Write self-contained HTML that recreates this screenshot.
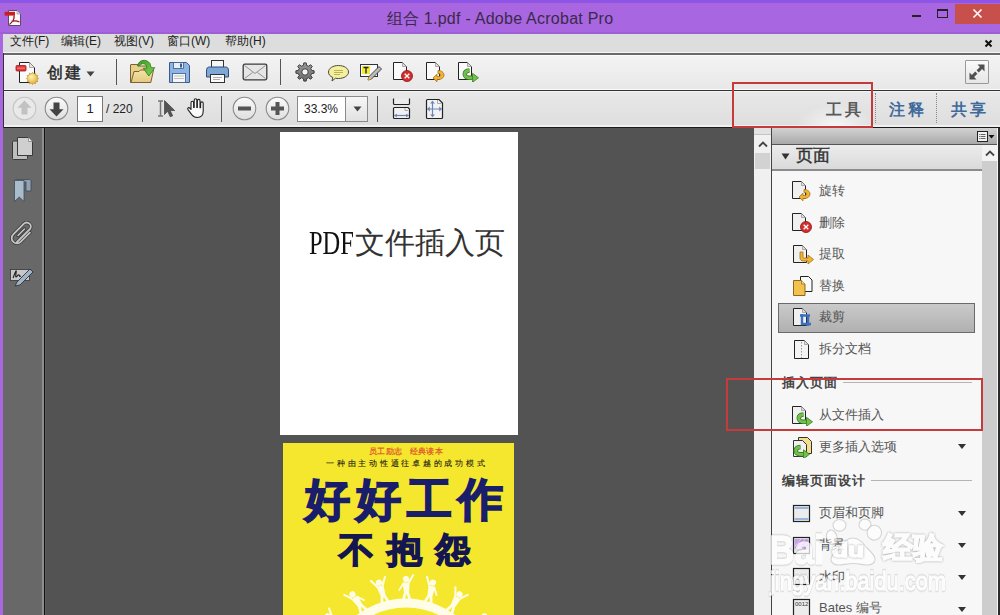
<!DOCTYPE html>
<html><head><meta charset="utf-8">
<style>
*{margin:0;padding:0;box-sizing:border-box}
html,body{width:1000px;height:615px;overflow:hidden}
body{position:relative;background:#a866e0;font-family:"Liberation Sans",sans-serif;color:#222}
.a{position:absolute}
#titlebar{left:0;top:0;width:1000px;height:34px;background:#a866e0}
#topstrip{left:0;top:0;width:1000px;height:3px;background:#8c55ea;border-bottom:1px solid #9655d8}
#title{left:0;top:9px;width:1000px;text-align:center;font-size:16px;color:#3a2a4a;letter-spacing:0.25px}
#menubar{left:3px;top:34px;width:997px;height:18px;background:#dddddd}
.mi{top:1px;font-size:12px;color:#222;white-space:nowrap}
#tb1{left:3px;top:56px;width:997px;height:33px;background:linear-gradient(#f3f3f3,#e8e8e8)}
#tb2{left:3px;top:92px;width:997px;height:33px;background:linear-gradient(#e8e8e8,#dedede)}
.hl{height:1px;background:#5a5a5a}
#rail{left:3px;top:128px;width:40px;height:487px;background:#686868}
#doc{left:46px;top:128px;width:708px;height:487px;background:#535353}
#vs{left:754px;top:128px;width:17px;height:487px;background:#f0f0f0}
#panel{left:772px;top:128px;width:228px;height:487px;background:#f4f4f4}
.it{position:absolute;left:819px;font-size:13px;line-height:18px;color:#555;white-space:nowrap}
.sh{position:absolute;left:782px;font-size:13px;line-height:18px;color:#444;font-weight:bold;white-space:nowrap;letter-spacing:1px}
.wm{color:#fff;-webkit-text-stroke:1.6px #fff;filter:drop-shadow(0 0 0.8px rgba(0,0,0,0.45));opacity:0.72;white-space:nowrap}
</style></head><body>
<div class="a" id="titlebar"></div>
<div class="a" id="topstrip"></div>
<div class="a" style="left:0;top:32px;width:1000px;height:2px;background:#9d5ed6"></div>
<div class="a" id="title">组合 1.pdf - Adobe Acrobat Pro</div>
<div class="a" id="menubar"></div>
<div class="a mi" style="left:10px;top:33px">文件(F)</div>
<div class="a mi" style="left:61px;top:33px">编辑(E)</div>
<div class="a mi" style="left:114px;top:33px">视图(V)</div>
<div class="a mi" style="left:167px;top:33px">窗口(W)</div>
<div class="a mi" style="left:225px;top:33px">帮助(H)</div>
<div class="a" style="left:3px;top:52px;width:997px;height:1px;background:#f6f6f6"></div>
<div class="a" style="left:3px;top:53px;width:997px;height:2px;background:#6a6a6a"></div>
<div class="a" style="left:3px;top:55px;width:997px;height:1px;background:#fbfbfb"></div>
<div class="a" id="tb1"></div>
<div class="a" style="left:3px;top:89px;width:997px;height:1px;background:#fafafa"></div>
<div class="a" style="left:3px;top:90px;width:997px;height:1px;background:#333"></div>
<div class="a" style="left:3px;top:91px;width:997px;height:1px;background:#f4f4f4"></div>
<div class="a" id="tb2"></div>
<div class="a" style="left:3px;top:125px;width:997px;height:2px;background:#f0f0f0"></div>
<div class="a" style="left:3px;top:127px;width:997px;height:1px;background:#1a1a1a"></div>
<div class="a" style="left:3px;top:53px;width:1px;height:75px;background:#333"></div>
<div class="a" id="rail"></div>
<div class="a" style="left:42px;top:128px;width:2px;height:487px;background:#8e8e8e"></div><div class="a" style="left:44px;top:128px;width:1px;height:487px;background:#111"></div><div class="a" style="left:45px;top:128px;width:1px;height:487px;background:#5c5c5c"></div>
<div class="a" id="doc"></div>
<div class="a" id="vs"></div>
<div class="a" style="left:771px;top:128px;width:1px;height:487px;background:#444"></div>
<div class="a" id="panel"></div>
<div class="a" style="left:280px;top:132px;width:238px;height:303px;background:#fff"></div>

<!-- app icon -->
<svg class="a" style="left:4px;top:9px" width="18" height="18" viewBox="0 0 18 18">
<path d="M4.5 1.5h8.5l3.5 3.5v11.5h-12z" fill="#fbf7fb" stroke="#5d4a70" stroke-width="1"/>
<path d="M13 1.5v3.5h3.5" fill="#ddd" stroke="#888" stroke-width="0.6"/>
<rect x="0.6" y="2.8" width="10.4" height="3.8" fill="#c81e24"/>
<path d="M10 6.5c.6 3-1.5 6.5-4.5 9M7.5 12.3c2.5-.8 5.5-.6 8 .7" fill="none" stroke="#9c1418" stroke-width="1.3"/>
</svg>
<!-- window buttons -->
<div class="a" style="left:912px;top:15px;width:9px;height:2px;background:#222"></div>
<div class="a" style="left:937px;top:9px;width:11px;height:9px;border:1px solid #222;border-top-width:2px"></div>
<div class="a" style="left:955px;top:4px;width:45px;height:20px;background:#c8504c"></div>
<svg class="a" style="left:972px;top:8px" width="11" height="11" viewBox="0 0 11 11"><path d="M1.5 1.5l8 8M9.5 1.5l-8 8" stroke="#fff" stroke-width="1.6"/></svg>
<!-- menu close x -->
<svg class="a" style="left:984px;top:39px" width="9" height="9" viewBox="0 0 9 9"><path d="M1.5 1.5l6 6M7.5 1.5l-6 6" stroke="#111" stroke-width="2"/></svg>

<!-- ===== toolbar 1 ===== -->
<!-- create icon -->
<svg class="a" style="left:14px;top:60px" width="26" height="26" viewBox="0 0 26 26">
<defs><radialGradient id="sg" cx="0.4" cy="0.35" r="0.7"><stop offset="0" stop-color="#fff4b0"/><stop offset="1" stop-color="#e0a82a"/></radialGradient></defs>
<path d="M5.5 2.5h10l5 5v15h-15z" fill="#fafafa" stroke="#222" stroke-width="1"/>
<path d="M15.5 2.5v5h5" fill="#e6e6e6" stroke="#999" stroke-width="0.8"/>
<rect x="2" y="5.5" width="10" height="5.5" rx="1" fill="#e03a3a" stroke="#a01818" stroke-width="0.8"/>
<path d="M3 8.2h8" stroke="#ff9a9a" stroke-width="0.8"/>
<path d="M24.70 18.50 L22.94 19.69 L23.87 21.60 L21.75 21.75 L21.60 23.87 L19.69 22.94 L18.50 24.70 L17.31 22.94 L15.40 23.87 L15.25 21.75 L13.13 21.60 L14.06 19.69 L12.30 18.50 L14.06 17.31 L13.13 15.40 L15.25 15.25 L15.40 13.13 L17.31 14.06 L18.50 12.30 L19.69 14.06 L21.60 13.13 L21.75 15.25 L23.87 15.40 L22.94 17.31Z" fill="url(#sg)" stroke="#b98a20" stroke-width="0.6"/>
</svg>
<div class="a" style="left:47px;top:63px;font-size:16px;color:#2a2a2a;-webkit-text-stroke:0.5px #2a2a2a;letter-spacing:2px">创建</div>
<svg class="a" style="left:86px;top:71px" width="9" height="6" viewBox="0 0 9 6"><path d="M0.5 0.5h8l-4 5z" fill="#444"/></svg>
<div class="a" style="left:116px;top:59px;width:1px;height:26px;background:#555"></div>
<!-- open folder -->
<svg class="a" style="left:126px;top:56px" width="34" height="30" viewBox="0 0 34 30">
<defs><linearGradient id="fg" x1="0" y1="0" x2="0" y2="1"><stop offset="0" stop-color="#f6e3a6"/><stop offset="1" stop-color="#e4c982"/></linearGradient>
<linearGradient id="ag" x1="0" y1="0" x2="1" y2="1"><stop offset="0" stop-color="#3f9a22"/><stop offset="1" stop-color="#7fd35a"/></linearGradient></defs>
<path d="M5 8.5h7.5l1.5 1.5h8.5c.6 0 1 .4 1 1v15.5H4.5V9c0-.3.2-.5.5-.5z" fill="#e8cf8c" stroke="#7a6330" stroke-width="1"/>
<path d="M8 15.5h5l1.5-1.5h13l-2.7 12.5H5z" fill="url(#fg)" stroke="#7a6330" stroke-width="1"/>
<path d="M11.5 10C12.5 4 20 2 24 7.5l1.2 4.2h3.6l-6 8.3-5.5-7.8h3.5l-.7-2.8c-1.6-2.5-5.5-2.2-6.5.8z" fill="url(#ag)" stroke="#2f7a18" stroke-width="0.8"/>
</svg>
<!-- save -->
<svg class="a" style="left:168px;top:61px" width="23" height="23" viewBox="0 0 23 23">
<path d="M1.5 1.5h17l3 3v17h-20z" fill="#8db4e2" stroke="#3a5a8c" stroke-width="1"/>
<rect x="5.5" y="1.5" width="10" height="6" fill="#e8eef6" stroke="#3a5a8c" stroke-width="0.8"/>
<rect x="12" y="2.5" width="2" height="4" fill="#3a5a8c"/>
<rect x="4.5" y="12.5" width="13" height="9" fill="#f6f6f6" stroke="#3a5a8c" stroke-width="0.8"/>
<path d="M6 15h10M6 17.5h10" stroke="#aaa" stroke-width="0.7"/>
</svg>
<!-- print -->
<svg class="a" style="left:205px;top:59px" width="25" height="25" viewBox="0 0 25 25">
<rect x="6.5" y="1.5" width="12" height="9" fill="#f6f6f6" stroke="#333" stroke-width="1"/>
<path d="M1.5 12c0-3 1-4 3-4h16c2 0 3 1 3 4v6h-22z" fill="#7ea7d6" stroke="#2f4f7a" stroke-width="1"/>
<rect x="5.5" y="15.5" width="14" height="8" fill="#fbfbfb" stroke="#333" stroke-width="1"/>
<path d="M8 18.5h9M8 20.5h7" stroke="#999" stroke-width="0.8"/>
</svg>
<!-- mail -->
<svg class="a" style="left:242px;top:63px" width="26" height="18" viewBox="0 0 26 18">
<rect x="1.2" y="1.2" width="23.6" height="15.6" rx="1.5" fill="#e6e6e6" stroke="#3a3a3a" stroke-width="1.3"/>
<path d="M2.5 2.5l10.5 8 10.5-8M2.5 15.5l8-6M23.5 15.5l-8-6" fill="none" stroke="#888" stroke-width="0.9"/>
</svg>
<div class="a" style="left:280px;top:59px;width:1px;height:26px;background:#555"></div>
<!-- gear -->
<svg class="a" style="left:295px;top:62px" width="20" height="20" viewBox="0 0 20 20">
<defs><linearGradient id="gg" x1="0" y1="0" x2="0" y2="1"><stop offset="0" stop-color="#9a9a9a"/><stop offset="1" stop-color="#6a6a6a"/></linearGradient></defs>
<path d="M16.61 8.41 L19.12 8.78 L19.12 11.22 L16.61 11.59 L15.80 13.55 L17.31 15.58 L15.58 17.31 L13.55 15.80 L11.59 16.61 L11.22 19.12 L8.78 19.12 L8.41 16.61 L6.45 15.80 L4.42 17.31 L2.69 15.58 L4.20 13.55 L3.39 11.59 L0.88 11.22 L0.88 8.78 L3.39 8.41 L4.20 6.45 L2.69 4.42 L4.42 2.69 L6.45 4.20 L8.41 3.39 L8.78 0.88 L11.22 0.88 L11.59 3.39 L13.55 4.20 L15.58 2.69 L17.31 4.42 L15.80 6.45Z" fill="url(#gg)" stroke="#333" stroke-width="0.9" stroke-linejoin="round"/>
<circle cx="10" cy="10" r="3.2" fill="#f4f4f4" stroke="#333" stroke-width="0.9"/>
</svg>
<!-- bubble -->
<svg class="a" style="left:327px;top:64px" width="23" height="19" viewBox="0 0 23 19">
<path d="M11.5 1.5c5.5 0 10 2.8 10 6.5s-4.5 6.5-10 6.5c-1 0-2 0-3-.3L5 17l.8-3.6C3 12.3 1.5 10.4 1.5 8 1.5 4.3 6 1.5 11.5 1.5z" fill="#f5f0a0" stroke="#4a4a3a" stroke-width="1"/>
<path d="M7 6.5h9M7 8.5h9M7 10.5h6" stroke="#b8ae50" stroke-width="0.9"/>
</svg>
<!-- text pen -->
<svg class="a" style="left:359px;top:62px" width="24" height="21" viewBox="0 0 24 21">
<rect x="1.5" y="2.5" width="17" height="12" fill="#fafafa" stroke="#333" stroke-width="1"/>
<rect x="3" y="4" width="8" height="8" fill="#f3ea3a"/>
<path d="M4.5 5.5h5M7 5.5v6" stroke="#222" stroke-width="1.3"/>
<path d="M9 18l1-3.5 10-10 2.5 2.5-10 10z" fill="#bbb" stroke="#333" stroke-width="0.9"/>
<path d="M9 18l1-3.5 2.5 2.5z" fill="#f2c94c"/>
</svg>
<!-- delete page -->
<svg class="a" style="left:392px;top:61px" width="22" height="21" viewBox="0 0 22 21">
<path d="M1.5 1.5h9l4 4v13h-13z" fill="#fafafa" stroke="#222" stroke-width="1"/>
<path d="M10.5 1.5v4h4" fill="#ddd" stroke="#999" stroke-width="0.8"/>
<circle cx="15" cy="15" r="5.5" fill="#d32f2f" stroke="#8a1010" stroke-width="0.8"/>
<path d="M12.7 12.7l4.6 4.6M17.3 12.7l-4.6 4.6" stroke="#fff" stroke-width="1.3"/>
</svg>
<!-- rotate page -->
<svg class="a" style="left:425px;top:61px" width="22" height="21" viewBox="0 0 22 21">
<path d="M1.5 1.5h9l4 4v13h-13z" fill="#fafafa" stroke="#222" stroke-width="1"/>
<path d="M10.5 1.5v4h4" fill="#ddd" stroke="#999" stroke-width="0.8"/>
<path d="M13 9.5c3.5 0 6 2 6 4.5s-2.5 4.5-5.5 4.5h-1.5v2.3l-4-3.8 4-3.8v2.3h1.5c1.2 0 2.3-.6 2.3-1.5S14.5 12.5 13 12.5z" fill="#f2b531" stroke="#a5701a" stroke-width="0.8"/>
</svg>
<!-- extract page -->
<svg class="a" style="left:457px;top:61px" width="23" height="21" viewBox="0 0 23 21">
<path d="M1.5 1.5h9l4 4v13h-13z" fill="#fafafa" stroke="#222" stroke-width="1"/>
<path d="M10.5 1.5v4h4" fill="#ddd" stroke="#999" stroke-width="0.8"/>
<path d="M12.5 9.5C6 10 6.5 16.8 12 16.8h4" fill="none" stroke="#3a7d22" stroke-width="4.4"/>
<path d="M12.5 9.5C6 10 6.5 16.8 12 16.8h4" fill="none" stroke="#72c150" stroke-width="2.8"/>
<path d="M15.5 12.3l6 4.5-6 4.5z" fill="#72c150" stroke="#3a7d22" stroke-width="0.8"/>
</svg>
<!-- fullscreen -->
<div class="a" style="left:965px;top:60px;width:24px;height:24px;border:1px solid #999;background:linear-gradient(#fafafa,#e6e6e6);border-radius:1px"></div>
<svg class="a" style="left:967px;top:62px" width="20" height="20" viewBox="0 0 20 20">
<path d="M10.5 2.5h7v7l-2.4-2.4-3.3 3.3-2.2-2.2 3.3-3.3zM9.5 17.5h-7v-7l2.4 2.4 3.3-3.3 2.2 2.2-3.3 3.3z" fill="#505050"/>
</svg>

<!-- ===== toolbar 2 ===== -->
<svg class="a" style="left:12px;top:96px" width="25" height="25" viewBox="0 0 25 25">
<circle cx="12.5" cy="12.5" r="11.3" fill="#e9e9e9" stroke="#c4c4c4" stroke-width="1.1"/>
<path d="M12.5 4.5l7 7.2h-4v6.8h-6v-6.8h-4z" fill="#c2c2c2"/>
</svg>
<svg class="a" style="left:44px;top:96px" width="25" height="25" viewBox="0 0 25 25">
<defs><linearGradient id="cg" x1="0" y1="0" x2="0" y2="1"><stop offset="0" stop-color="#fbfbfb"/><stop offset="1" stop-color="#dedede"/></linearGradient></defs>
<circle cx="12.5" cy="12.5" r="11.3" fill="url(#cg)" stroke="#8a8a8a" stroke-width="1.1"/>
<path d="M12.5 20.5l7-7.2h-4V6.5h-6v6.8h-4z" fill="#444"/>
</svg>
<div class="a" style="left:77px;top:96px;width:26px;height:26px;border:1px solid #777;background:#fff"></div>
<div class="a" style="left:77px;top:101px;width:26px;text-align:center;font-size:13px;color:#222">1</div>
<div class="a" style="left:106px;top:102px;font-size:12px;color:#222">/ 220</div>
<div class="a" style="left:142px;top:96px;width:1px;height:26px;background:#555"></div>
<svg class="a" style="left:156px;top:99px" width="22" height="20" viewBox="0 0 22 20">
<path d="M2 2h5M2 17h5M4.5 2v15" stroke="#777" stroke-width="1.5"/>
<path d="M8.5 1.5v14l3.2-3.2 2.5 5.5 2.5-1-2.5-5.3h4.5z" fill="#555" stroke="#333" stroke-width="0.6"/>
</svg>
<svg class="a" style="left:185px;top:97px" width="24" height="22" viewBox="0 0 24 22">
<path d="M6 12.5V5.8Q6 4.3 7.3 4.3Q8.6 4.3 8.6 5.8V10.5H9.2V3.3Q9.2 1.8 10.5 1.8Q11.8 1.8 11.8 3.3V10.5H12.4V3.8Q12.4 2.4 13.7 2.4Q15 2.4 15 3.8V10.8H15.6V6.3Q15.6 4.9 16.9 4.9Q18.2 4.9 18.2 6.3V14Q18.2 20.5 12.2 20.5Q8.6 20.5 6.9 17.8L3 12.6Q2.2 11.3 3.4 10.7Q4.6 10.2 6 12.5Z" fill="#fafafa" stroke="#222" stroke-width="1.1" stroke-linejoin="round"/>
</svg>
<div class="a" style="left:221px;top:96px;width:1px;height:26px;background:#555"></div>
<svg class="a" style="left:232px;top:96px" width="25" height="25" viewBox="0 0 25 25">
<circle cx="12.5" cy="12.5" r="11.3" fill="url(#cg)" stroke="#8a8a8a" stroke-width="1.1"/>
<rect x="6" y="10.5" width="13" height="4" fill="#555"/>
</svg>
<svg class="a" style="left:265px;top:96px" width="25" height="25" viewBox="0 0 25 25">
<circle cx="12.5" cy="12.5" r="11.3" fill="url(#cg)" stroke="#8a8a8a" stroke-width="1.1"/>
<path d="M10.5 6h4v4.5H19v4h-4.5V19h-4v-4.5H6v-4h4.5z" fill="#555"/>
</svg>
<div class="a" style="left:297px;top:96px;width:71px;height:26px;border:1px solid #8a8a8a;background:#fff"></div>
<div class="a" style="left:345px;top:97px;width:22px;height:24px;border-left:1px solid #8a8a8a;background:linear-gradient(#f6f6f6,#e2e2e2)"></div>
<svg class="a" style="left:353px;top:106px" width="9" height="6" viewBox="0 0 9 6"><path d="M0.5 0.5h8l-4 5z" fill="#444"/></svg>
<div class="a" style="left:304px;top:102px;font-size:12px;color:#222">33.3%</div>
<div class="a" style="left:377px;top:96px;width:1px;height:26px;background:#555"></div>
<svg class="a" style="left:392px;top:98px" width="19" height="22" viewBox="0 0 19 22">
<path d="M1.5 0.5v5c0 .6.4 1 1 1h14c.6 0 1-.4 1-1v-5" fill="#ececec" stroke="#222" stroke-width="1.2"/>
<path d="M2.5 9.5h13.5l1.5 1.5v8.5c0 .6-.4 1-1 1h-14c-.6 0-1-.4-1-1v-9c0-.6.4-1 1-1z" fill="#f2f2f2" stroke="#222" stroke-width="1.2"/>
<path d="M13 10v2.5h3" fill="none" stroke="#999" stroke-width="0.8"/>
<path d="M2.5 17.5h14" stroke="#6a86b8" stroke-width="1.2"/>
<path d="M2.2 17.5l2.6-2v4zM16.8 17.5l-2.6-2v4z" fill="#6a86b8"/>
</svg>
<svg class="a" style="left:425px;top:98px" width="19" height="22" viewBox="0 0 19 22">
<path d="M2.5 1.5h11.5l3.5 3.5v14.5c0 .6-.4 1-1 1h-14c-.6 0-1-.4-1-1V2.5c0-.6.4-1 1-1z" fill="#f2f2f2" stroke="#222" stroke-width="1.2"/>
<path d="M12.5 2v3.5h4" fill="none" stroke="#999" stroke-width="0.8"/>
<path d="M7.5 3.5v15M2.5 11h14" stroke="#6a86b8" stroke-width="1.2"/>
<path d="M7.5 2.8l-2.4 2.8h4.8zM7.5 19.2l-2.4-2.8h4.8zM2 11l2.8-2.4v4.8zM17 11l-2.8-2.4v4.8z" fill="#6a86b8"/>
</svg>
<!-- tabs -->
<div class="a" style="left:780px;top:91px;width:92px;height:36px;background:radial-gradient(ellipse 40px 22px at 60% 100%,rgba(250,250,250,0.9) 0%,rgba(250,250,250,0) 100%)"></div>
<div class="a" style="left:826px;top:100px;font-size:16px;color:#5a5a5a;letter-spacing:2.5px;font-weight:bold">工具</div>
<div class="a" style="left:875px;top:93px;width:1px;height:30px;border-left:1px dotted #888"></div>
<div class="a" style="left:889px;top:100px;font-size:16px;color:#3f6a9c;font-weight:bold;letter-spacing:2.5px">注释</div>
<div class="a" style="left:936px;top:93px;width:1px;height:30px;border-left:1px dotted #888"></div>
<div class="a" style="left:951px;top:100px;font-size:16px;color:#3f6a9c;font-weight:bold;letter-spacing:2.5px">共享</div>
<!-- red rect -->
<div class="a" style="left:732px;top:82px;width:141px;height:46px;border:2px solid #c63a3c"></div>

<!-- ===== left rail icons ===== -->
<svg class="a" style="left:11px;top:136px" width="24" height="25" viewBox="0 0 24 25">
<rect x="1.5" y="5" width="15" height="18.5" rx="1" fill="#bdbdbd" stroke="#3a3a3a" stroke-width="1"/>
<path d="M6.5 1.5h11l4 4v14h-15z" fill="#cfcfcf" stroke="#3a3a3a" stroke-width="1"/>
<path d="M17.5 1.5v4h4" fill="#eee" stroke="#777" stroke-width="0.7"/>
</svg>
<svg class="a" style="left:12px;top:178px" width="21" height="25" viewBox="0 0 21 25">
<path d="M2 3c0-1 .5-1.5 1.5-1.5h14c1 0 1.5.5 1.5 1.5v10h-5V3.5" fill="#8fa3b3" stroke="#3e4a55" stroke-width="0.8"/>
<path d="M2.5 2.5h9.5v21l-4.75-4.5L2.5 23.5z" fill="#a9bccb" stroke="#3e4a55" stroke-width="0.8"/>
</svg>
<svg class="a" style="left:10px;top:221px" width="24" height="25" viewBox="0 0 24 25">
<path d="M7 21L19.5 8.5c1.8-1.8 1.8-4.2 0-5.8s-4-1.6-5.8.2L3.5 13.2c-2.4 2.4-2.4 5.6-.2 7.6s5.4 2 7.6-.2l9-9" fill="none" stroke="#3a3a3a" stroke-width="3.4" stroke-linecap="round"/>
<path d="M7 21L19.5 8.5c1.8-1.8 1.8-4.2 0-5.8s-4-1.6-5.8.2L3.5 13.2c-2.4 2.4-2.4 5.6-.2 7.6s5.4 2 7.6-.2l9-9" fill="none" stroke="#c4c4c4" stroke-width="1.8" stroke-linecap="round"/>
<path d="M8 14.5l6.5-6.5" stroke="#3a3a3a" stroke-width="3.2" stroke-linecap="round"/>
<path d="M8 14.5l6.5-6.5" stroke="#c4c4c4" stroke-width="1.6" stroke-linecap="round"/>
</svg>
<svg class="a" style="left:9px;top:266px" width="26" height="22" viewBox="0 0 26 22">
<rect x="1.5" y="3.5" width="19" height="11" fill="#c8c8c8" stroke="#333" stroke-width="0.8"/>
<path d="M4 12c1-2 2-6 3-7s-1 6 0 6 2-3 3-2 0 2 2 1" fill="none" stroke="#222" stroke-width="1.1"/>
<path d="M6 20l2-4 13-13 3 3-13 13z" fill="#9fb4c8" stroke="#333" stroke-width="0.9"/>
</svg>

<!-- ===== page 1 ===== -->
<div class="a" style="left:309px;top:226px;white-space:nowrap;font-family:'Liberation Serif',serif;font-size:34px;line-height:34px;color:#111;transform:scaleX(0.72);transform-origin:0 0">PDF</div>
<div class="a" style="left:355px;top:227px;white-space:nowrap;font-size:30px;line-height:32px;color:#333">文件插入页</div>

<!-- ===== page 2 : cover ===== -->
<div class="a" style="left:283px;top:443px;width:231px;height:172px;background:#f5e72e;overflow:hidden">
 <div class="a" style="left:86px;top:3px;font-size:8px;color:#e0502a;white-space:nowrap;letter-spacing:0.3px;-webkit-text-stroke:0.2px #e0502a">员工励志 &nbsp;&nbsp;经典读本</div>
 <div class="a" style="left:43px;top:15px;font-size:8px;color:#151515;white-space:nowrap;letter-spacing:2.75px;-webkit-text-stroke:0.1px #151515;font-family:'Liberation Serif',serif">一种由主动性通往卓越的成功模式</div>
 <div class="a" style="left:22px;top:33px;font-size:45px;line-height:48px;color:#1a1d6a;white-space:nowrap;font-weight:bold;letter-spacing:6px;-webkit-text-stroke:1.6px #1a1d6a">好好工作</div>
 <div class="a" style="left:56px;top:87px;font-size:35px;line-height:40px;color:#141650;white-space:nowrap;font-weight:bold;letter-spacing:13px;-webkit-text-stroke:1.4px #141650">不抱怨</div>
 <svg class="a" style="left:0;top:0" width="232" height="172" viewBox="0 0 232 172">
  <circle cx="123" cy="237" r="77" fill="none" stroke="#fffde8" stroke-width="9"/>
  <g fill="#fffde8"><g transform="rotate(-51 123 237) translate(123 157) scale(1.4)"><circle cx="0" cy="-15" r="2.2"/><path d="M-2.6 -12.5h5.2l-.4 7 1.6 5.5h-2l-1.4-4.5-1.4 4.5h-2l1.6-5.5z"/><path d="M-2.6 -12l-3 5 1 .6 3-4.6zM2.6 -12l3.5-6-1.2-.6-3.6 5.6z"/></g><g transform="rotate(-32 123 237) translate(123 157) scale(1.4)"><circle cx="0" cy="-15" r="2.2"/><path d="M-2.6 -12.5h5.2l-.4 7 1.6 5.5h-2l-1.4-4.5-1.4 4.5h-2l1.6-5.5z"/><path d="M-2.6 -12l-3.5-6 1.2-.6 3.6 5.6zM2.6 -12l3 5-1 .6-3-4.6z"/></g><g transform="rotate(-15.5 123 237) translate(123 157) scale(1.4)"><circle cx="0" cy="-15" r="2.2"/><path d="M-2.6 -12.5h5.2l-.4 7 1.6 5.5h-2l-1.4-4.5-1.4 4.5h-2l1.6-5.5z"/><path d="M-2.6 -12l-3.5-6 1.2-.6 3.6 5.6zM2.6 -12l3.5-6-1.2-.6-3.6 5.6z"/></g><g transform="rotate(0 123 237) translate(123 157) scale(1.4)"><circle cx="0" cy="-15" r="2.2"/><path d="M-2.6 -12.5h5.2l-.4 7 1.6 5.5h-2l-1.4-4.5-1.4 4.5h-2l1.6-5.5z"/><path d="M-2.6 -12l-3 5 1 .6 3-4.6zM2.6 -12l3.5-6-1.2-.6-3.6 5.6z"/></g><g transform="rotate(15.5 123 237) translate(123 157) scale(1.4)"><circle cx="0" cy="-15" r="2.2"/><path d="M-2.6 -12.5h5.2l-.4 7 1.6 5.5h-2l-1.4-4.5-1.4 4.5h-2l1.6-5.5z"/><path d="M-2.6 -12l-3.5-6 1.2-.6 3.6 5.6zM2.6 -12l3 5-1 .6-3-4.6z"/></g><g transform="rotate(32 123 237) translate(123 157) scale(1.4)"><circle cx="0" cy="-15" r="2.2"/><path d="M-2.6 -12.5h5.2l-.4 7 1.6 5.5h-2l-1.4-4.5-1.4 4.5h-2l1.6-5.5z"/><path d="M-2.6 -12l-3.5-6 1.2-.6 3.6 5.6zM2.6 -12l3.5-6-1.2-.6-3.6 5.6z"/></g><g transform="rotate(51 123 237) translate(123 157) scale(1.4)"><circle cx="0" cy="-15" r="2.2"/><path d="M-2.6 -12.5h5.2l-.4 7 1.6 5.5h-2l-1.4-4.5-1.4 4.5h-2l1.6-5.5z"/><path d="M-2.6 -12l-3 5 1 .6 3-4.6zM2.6 -12l3.5-6-1.2-.6-3.6 5.6z"/></g></g>
 </svg>
</div>

<!-- ===== vertical scrollbar ===== -->
<div class="a" style="left:754px;top:128px;width:17px;height:7px;background:#e2e2e2;border-bottom:1px solid #c4c4c4"></div>
<svg class="a" style="left:758px;top:140px" width="10" height="8" viewBox="0 0 10 8"><path d="M1 6.5L5 2.5l4 4" fill="none" stroke="#444" stroke-width="1.8"/></svg>
<div class="a" style="left:755px;top:153px;width:15px;height:16px;background:#d2d2d2"></div>

<!-- ===== right panel ===== -->
<div class="a" style="left:772px;top:128px;width:228px;height:16px;background:linear-gradient(#d2d2d2,#a9a9a9)"></div>
<div class="a" style="left:772px;top:144px;width:225px;height:1px;background:#555"></div>
<svg class="a" style="left:976px;top:130px" width="19" height="13" viewBox="0 0 19 13">
<rect x="1.5" y="1.5" width="10" height="10" fill="#f2f2f2" stroke="#222" stroke-width="1"/>
<path d="M4.5 4.5h5M4.5 6.5h5M4.5 8.5h5" stroke="#666" stroke-width="1"/>
<path d="M3 4.5h0.8M3 6.5h0.8M3 8.5h0.8" stroke="#666" stroke-width="1"/>
<path d="M12.5 5h6l-3 3.5z" fill="#111"/>
</svg>
<div class="a" style="left:772px;top:145px;width:210px;height:24px;background:linear-gradient(#ececec,#dadada)"></div>
<div class="a" style="left:772px;top:169px;width:210px;height:2px;background:#8c8c8c"></div>
<svg class="a" style="left:781px;top:153px" width="9" height="7" viewBox="0 0 9 7"><path d="M0.5 0.5h8l-4 6z" fill="#333"/></svg>
<div class="a" style="left:796px;top:146px;font-size:17px;color:#333;-webkit-text-stroke:0.45px #333;line-height:20px">页面</div>
<div class="a" style="left:772px;top:171px;width:210px;height:444px;background:#f7f7f7"></div>
<!-- right scrollbar -->
<div class="a" style="left:982px;top:145px;width:15px;height:470px;background:#f3f3f3"></div>
<svg class="a" style="left:985px;top:149px" width="10" height="8" viewBox="0 0 10 8"><path d="M1 6.5L5 2.5l4 4" fill="none" stroke="#444" stroke-width="1.8"/></svg>
<div class="a" style="left:982px;top:161px;width:15px;height:454px;background:#cdcdcd"></div>
<div class="a" style="left:997px;top:128px;width:1px;height:487px;background:#f5f5f5"></div>
<div class="a" style="left:998px;top:128px;width:2px;height:487px;background:#2a2a2a"></div>

<!-- selected item bg -->
<div class="a" style="left:778px;top:303px;width:197px;height:30px;border:1px solid #6a6a6a;background:linear-gradient(#cacaca,#b0b0b0)"></div>

<!-- items -->
<div class="it" style="top:182px">旋转</div>
<div class="it" style="top:214px">删除</div>
<div class="it" style="top:245px">提取</div>
<div class="it" style="top:277px">替换</div>
<div class="it" style="top:308px">裁剪</div>
<div class="it" style="top:340px">拆分文档</div>
<div class="sh" style="top:374px">插入页面</div>
<div class="a" style="left:843px;top:382px;width:129px;height:1px;background:#b4b4b4"></div>
<div class="it" style="top:406px">从文件插入</div>
<div class="it" style="top:438px">更多插入选项</div>
<div class="sh" style="top:472px">编辑页面设计</div>
<div class="a" style="left:871px;top:480px;width:101px;height:1px;background:#b4b4b4"></div>
<div class="it" style="top:504px">页眉和页脚</div>
<div class="it" style="top:536px">背景</div>
<div class="it" style="top:568px">水印</div>
<div class="it" style="top:599px">Bates 编号</div>
<svg class="a dd" style="left:958px;top:444px" width="8" height="5"><path d="M0 0h8l-4 5z" fill="#333"/></svg>
<svg class="a dd" style="left:958px;top:511px" width="8" height="5"><path d="M0 0h8l-4 5z" fill="#333"/></svg>
<svg class="a dd" style="left:958px;top:543px" width="8" height="5"><path d="M0 0h8l-4 5z" fill="#333"/></svg>
<svg class="a dd" style="left:958px;top:575px" width="8" height="5"><path d="M0 0h8l-4 5z" fill="#333"/></svg>
<svg class="a dd" style="left:958px;top:607px" width="8" height="5"><path d="M0 0h8l-4 5z" fill="#333"/></svg>

<!-- item icons -->
<svg class="a" style="left:791px;top:180px" width="22" height="21" viewBox="0 0 22 21">
<path d="M1.5 1.5h9l4 4v13h-13z" fill="#f0f0f0" stroke="#222" stroke-width="1"/>
<path d="M10.5 1.5v4h4" fill="#ddd" stroke="#999" stroke-width="0.8"/>
<path d="M13 9.5c3.5 0 6 2 6 4.5s-2.5 4.5-5.5 4.5h-1.5v2.3l-4-3.8 4-3.8v2.3h1.5c1.2 0 2.3-.6 2.3-1.5S14.5 12.5 13 12.5z" fill="#f2b531" stroke="#a5701a" stroke-width="0.8"/>
</svg>
<svg class="a" style="left:791px;top:212px" width="22" height="21" viewBox="0 0 22 21">
<path d="M1.5 1.5h9l4 4v13h-13z" fill="#f0f0f0" stroke="#222" stroke-width="1"/>
<path d="M10.5 1.5v4h4" fill="#ddd" stroke="#999" stroke-width="0.8"/>
<circle cx="15" cy="15" r="5.5" fill="#d32f2f" stroke="#8a1010" stroke-width="0.8"/>
<path d="M12.7 12.7l4.6 4.6M17.3 12.7l-4.6 4.6" stroke="#fff" stroke-width="1.3"/>
</svg>
<svg class="a" style="left:792px;top:244px" width="23" height="21" viewBox="0 0 23 21">
<path d="M1.5 1.5h9l4 4v13h-13z" fill="#f0f0f0" stroke="#222" stroke-width="1"/>
<path d="M10.5 1.5v4h4" fill="#ddd" stroke="#999" stroke-width="0.8"/>
<path d="M8 8v6c0 2 1.5 3 3.5 3H16v3l5.5-4.5L16 11v3h-4c-.7 0-1-.4-1-1V8z" fill="#f2b531" stroke="#a5701a" stroke-width="0.8"/>
</svg>
<svg class="a" style="left:792px;top:275px" width="22" height="22" viewBox="0 0 22 22">
<path d="M8.5 1.5h8l3.5 3.5v11.5h-11.5z" fill="#fafafa" stroke="#222" stroke-width="1"/>
<path d="M1.5 5.5h8l3.5 3.5v11.5h-11.5z" fill="#f2c14e" stroke="#8a6a20" stroke-width="1"/>
<path d="M9.5 5.5v3.5h3.5" fill="#f8dc8c" stroke="#8a6a20" stroke-width="0.7"/>
</svg>
<svg class="a" style="left:792px;top:307px" width="22" height="21" viewBox="0 0 22 21">
<path d="M1.5 1.5h9l4 4v13h-13z" fill="#f0f0f0" stroke="#222" stroke-width="1"/>
<path d="M10.5 1.5v4h4" fill="#ddd" stroke="#999" stroke-width="0.8"/>
<path d="M8 8.5h10M10 7v10h9M16 8.5V19" fill="none" stroke="#3b6fc0" stroke-width="2.4"/>
</svg>
<svg class="a" style="left:793px;top:339px" width="18" height="21" viewBox="0 0 18 21">
<path d="M1.5 1.5h10l4 4v14h-14z" fill="#f4f4f4" stroke="#222" stroke-width="1"/>
<path d="M11.5 1.5v4h4" fill="#ddd" stroke="#999" stroke-width="0.8"/>
<path d="M8.5 3v16" stroke="#999" stroke-width="1" stroke-dasharray="1.5 1.5"/>
</svg>
<svg class="a" style="left:791px;top:405px" width="22" height="21" viewBox="0 0 22 21">
<path d="M1.5 1.5h9l4 4v13h-13z" fill="#f0f0f0" stroke="#222" stroke-width="1"/>
<path d="M10.5 1.5v4h4" fill="#ddd" stroke="#999" stroke-width="0.8"/>
<path d="M12.5 9.5C6 10 6.5 16.8 12 16.8h4" fill="none" stroke="#3a7d22" stroke-width="4.4"/>
<path d="M12.5 9.5C6 10 6.5 16.8 12 16.8h4" fill="none" stroke="#72c150" stroke-width="2.8"/>
<path d="M15.5 12.3l6 4.5-6 4.5z" fill="#72c150" stroke="#3a7d22" stroke-width="0.8"/>
</svg>
<svg class="a" style="left:791px;top:436px" width="23" height="22" viewBox="0 0 23 22">
<path d="M7.5 1.5h9l4 4v12h-13z" fill="#f3e08a" stroke="#333" stroke-width="1"/>
<path d="M2.5 4.5h9l4 4v12h-13z" fill="#f0f0f0" stroke="#333" stroke-width="1"/>
<path d="M9.5 11C3 11.5 3.5 18.3 9 18.3h4" fill="none" stroke="#3a7d22" stroke-width="4.4"/>
<path d="M9.5 11C3 11.5 3.5 18.3 9 18.3h4" fill="none" stroke="#72c150" stroke-width="2.8"/>
<path d="M12.5 13.8l6 4.5-6 4.5z" fill="#72c150" stroke="#3a7d22" stroke-width="0.8"/>
</svg>
<svg class="a" style="left:792px;top:504px" width="19" height="19" viewBox="0 0 19 19">
<rect x="1.5" y="1.5" width="16" height="16" fill="#ececec" stroke="#222" stroke-width="1.2"/>
<path d="M2.5 4h14M2.5 15h14" stroke="#7aa4d8" stroke-width="1.4"/>
</svg>
<svg class="a" style="left:792px;top:536px" width="19" height="19" viewBox="0 0 19 19">
<rect x="1.5" y="1.5" width="16" height="16" fill="#ececec" stroke="#222" stroke-width="1.2"/>
<rect x="2.5" y="3" width="14" height="10" fill="#c8a0e8"/>
<path d="M3 10l6-7M6 13l7-10M10 13l6-7M14 13l2.5-3" stroke="#e8d4f6" stroke-width="1"/>
</svg>
<svg class="a" style="left:792px;top:567px" width="19" height="19" viewBox="0 0 19 19">
<rect x="1.5" y="1.5" width="16" height="16" fill="#ececec" stroke="#222" stroke-width="1.2"/>
<path d="M6 13c0-2 1-4 3.5-4s3.5 2 3.5 4" fill="none" stroke="#999" stroke-width="1"/>
</svg>
<svg class="a" style="left:792px;top:598px" width="19" height="19" viewBox="0 0 19 19">
<rect x="1.5" y="1.5" width="16" height="17" fill="#ececec" stroke="#222" stroke-width="1.2"/>
<text x="3" y="8" font-size="6" font-family="Liberation Sans" fill="#333">0012</text>
</svg>

<!-- red rect 2 -->
<div class="a" style="left:726px;top:378px;width:257px;height:53px;border:2px solid #c63a3c"></div>

<!-- baidu watermark -->
<svg class="a" style="left:824px;top:516px" width="60" height="52" viewBox="0 0 60 52">
<g fill="rgba(255,255,255,0.6)" stroke="rgba(130,130,130,0.3)" stroke-width="1.1">
<ellipse cx="7.8" cy="21.3" rx="5.2" ry="7.4" transform="rotate(-15 7.8 21.3)"/>
<ellipse cx="15.5" cy="9.3" rx="6.5" ry="5.8"/>
<ellipse cx="41" cy="8.7" rx="6" ry="5.6"/>
<ellipse cx="50.3" cy="16.7" rx="7.2" ry="7.4" transform="rotate(15 50.3 16.7)"/>
<path d="M29 22c6 0 10 5 14 10 4 4 8 7 8 11 0 4-3 6-8 6-4 0-8-1.5-14-1.5S19 49 15 49c-5 0-8-2-8-6 0-4 4-7 8-11 4-5 8-10 14-10z"/>
</g>
</svg>
<div class="a wm" id="wmBai" style="left:769px;top:530px;font-size:40px;line-height:40px;font-weight:bold;transform:scaleX(0.88);transform-origin:0 0">Bai</div>
<div class="a wm" id="wmdu" style="left:832px;top:539px;font-size:21px;line-height:21px;font-weight:bold;transform:scaleX(1.25);transform-origin:0 0">du</div>
<div class="a wm" id="wmjy" style="left:883px;top:530px;font-size:30px;line-height:36px;font-weight:bold">经验</div>
<div class="a wm" id="wmurl" style="left:770px;top:568px;font-size:26px;line-height:26px;transform:scaleX(0.84);transform-origin:0 0">jingyan.baidu.com</div>
</body></html>
